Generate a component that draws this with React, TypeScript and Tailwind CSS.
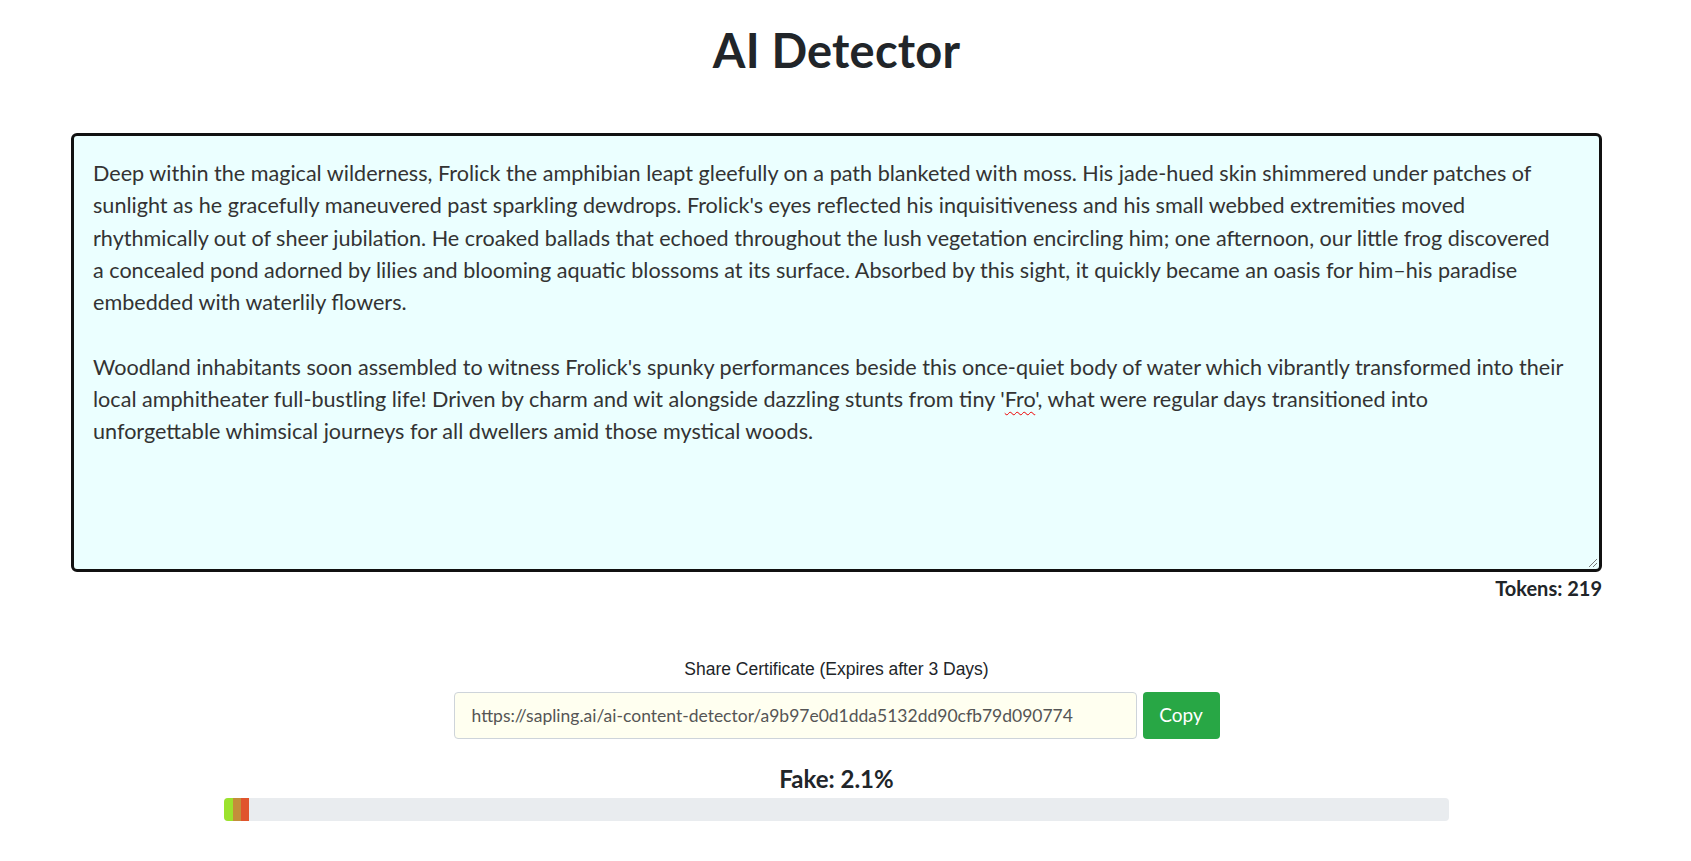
import { useState } from "react";

const bodyFont = { fontFamily: "Lato, 'Noto Sans', sans-serif" };

const para1 = [
	"Deep within the magical wilderness, Frolick the amphibian leapt gleefully on a path blanketed with moss. His jade-hued skin shimmered under patches of",
	"sunlight as he gracefully maneuvered past sparkling dewdrops. Frolick's eyes reflected his inquisitiveness and his small webbed extremities moved",
	"rhythmically out of sheer jubilation. He croaked ballads that echoed throughout the lush vegetation encircling him; one afternoon, our little frog discovered",
	"a concealed pond adorned by lilies and blooming aquatic blossoms at its surface. Absorbed by this sight, it quickly became an oasis for him–his paradise",
	"embedded with waterlily flowers.",
];

export default function App() {
	const [copied, setCopied] = useState(false);
	const url = "https://sapling.ai/ai-content-detector/a9b97e0d1dda5132dd90cfb79d090774";

	return (
		<div className="min-h-screen bg-white text-[#212529]" style={bodyFont}>
			<div className="ml-[71px] w-[1531px] flex flex-col items-center">
				<h1 className="mt-[18px] h-[64px] text-[47px] leading-[64px] font-bold tracking-[0.2px] text-[#212529]">
					AI Detector
				</h1>

				{/* text box, drawn as a div so the spellcheck squiggle can show */}
				<div className="relative mt-[51px] h-[439px] w-full rounded-[6px] border-[3px] border-[#111] bg-[#ebffff] px-[19px] pt-[21px] text-[21.6px] leading-[32.3px] text-[#333] whitespace-nowrap">
					<p>
						{para1.map((line) => (
							<span key={line} className="block">
								{line}
							</span>
						))}
					</p>
					<p className="mt-[32.3px]">
						<span className="block">
							Woodland inhabitants soon assembled to witness Frolick's spunky performances beside this once-quiet body of water which vibrantly transformed into their
						</span>
						<span className="block">
							local amphitheater full-bustling life! Driven by charm and wit alongside dazzling stunts from tiny '
							<span className="underline decoration-wavy decoration-[#e00] decoration-1 underline-offset-[4px]">Fro</span>
							', what were regular days transitioned into
						</span>
						<span className="block">
							unforgettable whimsical journeys for all dwellers amid those mystical woods.
						</span>
					</p>
					<svg className="absolute bottom-[1px] right-[1px]" width="12" height="12" viewBox="0 0 12 12">
						<path d="M11 3 L3 11 M11 7 L7 11" stroke="#777" strokeWidth="1" />
					</svg>
				</div>

				<div className="w-full text-right text-[20px] font-bold leading-[26px] mt-[3px] text-[#212529]">
					Tokens: 219
				</div>

				<div
					className="mt-[57px] text-[17.5px] leading-[22px] text-[#212529]"
					style={{ fontFamily: "'Liberation Sans', Arial, sans-serif" }}
				>
					Share Certificate (Expires after 3 Days)
				</div>

				<div className="mt-[12px] flex gap-[6px]">
					<input
						readOnly
						value={url}
						className="h-[47px] w-[683px] rounded-[4px] border border-[#ced4da] bg-[#fffff0] px-[17px] text-[17.5px] text-[#555] outline-none"
						style={bodyFont}
					/>
					<button
						onClick={() => setCopied(true)}
						className="h-[47px] w-[77px] rounded-[4px] bg-[#28a745] text-[19px] text-white"
					>
						{copied ? "Copied" : "Copy"}
					</button>
				</div>

				<div className="mt-[26px] text-[24px] font-bold leading-[28px] text-[#212529]">
					Fake: 2.1%
				</div>

				<div className="mt-[5px] flex h-[23px] w-[80%] overflow-hidden rounded-[4px] bg-[#e9ecef]">
					<div className="h-full w-[9px] bg-[#9be22d]" />
					<div className="h-full w-[8px] bg-[#c48e3a]" />
					<div className="h-full w-[8px] bg-[#e0552d]" />
				</div>
			</div>
		</div>
	);
}
